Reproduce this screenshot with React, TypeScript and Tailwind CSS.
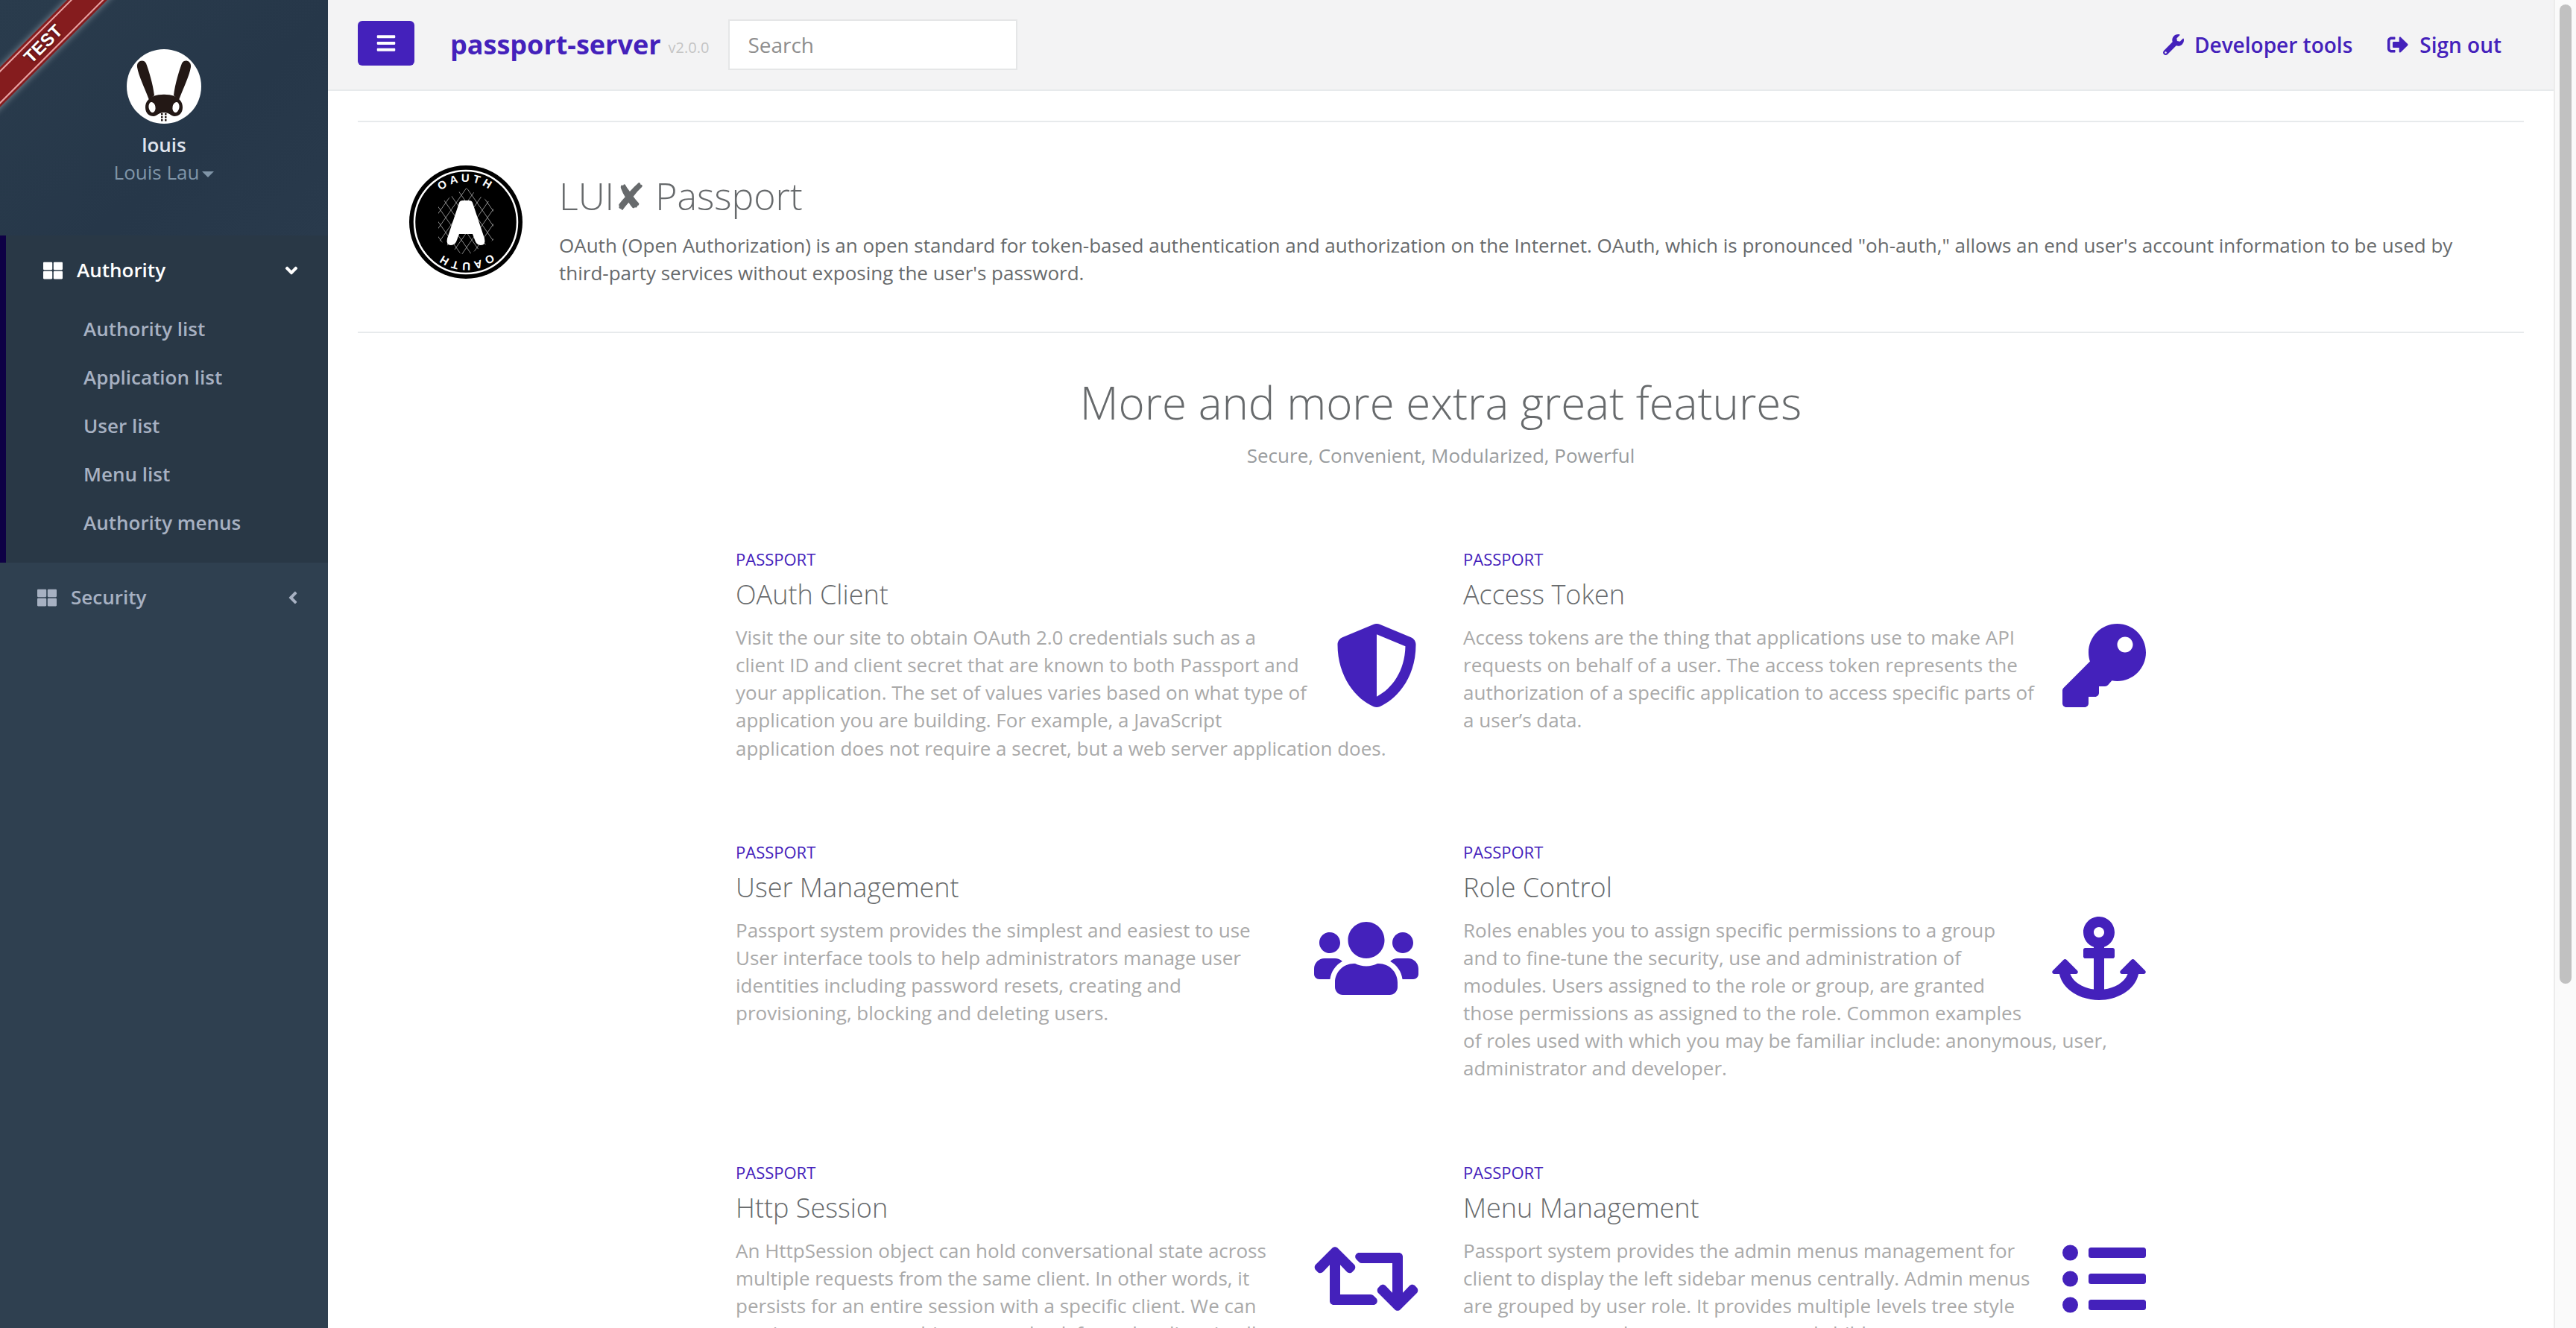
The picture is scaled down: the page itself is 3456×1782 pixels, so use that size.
import React from "react";
import { FaBars, FaWrench, FaSignOutAlt, FaThLarge, FaAngleDown, FaAngleLeft, FaShieldAlt, FaKey, FaUsers, FaAnchor, FaRetweet, FaListUl } from "react-icons/fa";

type FeatureData = { title: string; text: string; Icon: React.ComponentType<{ className?: string }>; iconClass: string };

const features: FeatureData[][] = [
  [
    { title: "OAuth Client", Icon: FaShieldAlt, iconClass: "w-[112px]", text: "Visit the our site to obtain OAuth 2.0 credentials such as a client ID and client secret that are known to both Passport and your application. The set of values varies based on what type of application you are building. For example, a JavaScript application does not require a secret, but a web server application does." },
    { title: "Access Token", Icon: FaKey, iconClass: "w-[112px]", text: "Access tokens are the thing that applications use to make API requests on behalf of a user. The access token represents the authorization of a specific application to access specific parts of a user’s data." },
  ],
  [
    { title: "User Management", Icon: FaUsers, iconClass: "w-[140px]", text: "Passport system provides the simplest and easiest to use User interface tools to help administrators manage user identities including password resets, creating and provisioning, blocking and deleting users." },
    { title: "Role Control", Icon: FaAnchor, iconClass: "w-[126px]", text: "Roles enables you to assign specific permissions to a group and to fine-tune the security, use and administration of modules. Users assigned to the role or group, are granted those permissions as assigned to the role. Common examples of roles used with which you may be familiar include: anonymous, user, administrator and developer." },
  ],
  [
    { title: "Http Session", Icon: FaRetweet, iconClass: "w-[140px]", text: "An HttpSession object can hold conversational state across multiple requests from the same client. In other words, it persists for an entire session with a specific client. We can use it to store everything we get back from the client in all requests." },
    { title: "Menu Management", Icon: FaListUl, iconClass: "w-[112px]", text: "Passport system provides the admin menus management for client to display the left sidebar menus centrally. Admin menus are grouped by user role. It provides multiple levels tree style management, and supports parent and child menus." },
  ],
];

function Bunny() {
  return (
    <svg viewBox="0 0 100 100" className="h-[100px] w-[100px]">
      <circle cx="50" cy="50" r="50" fill="#fff" />
      <g fill="#231815">
        <path d="M14 24C13 15 23 13 26 19C30 30 35 46 37 62L30 68C24 52 16 36 14 24Z" />
        <path d="M86 24C87 15 77 13 74 19C70 30 65 46 63 62L70 68C76 52 84 36 86 24Z" />
        <path d="M25 78C25 70 30 66 36 63C44 60 56 60 64 63C70 66 75 70 75 78C75 86 70 90 64 90C60 90 57 85 50 85C43 85 40 90 36 90C30 90 25 86 25 78Z" />
      </g>
      <ellipse cx="34" cy="78" rx="4.5" ry="7" fill="#fff" transform="rotate(-10 34 78)" />
      <ellipse cx="66" cy="78" rx="4.5" ry="7" fill="#fff" transform="rotate(10 66 78)" />
      <g fill="#231815">
        <rect x="46" y="86" width="2.5" height="2.5" />
        <rect x="51" y="86" width="2.5" height="2.5" />
        <rect x="46" y="90" width="2.5" height="2.5" />
        <rect x="51" y="90" width="2.5" height="2.5" />
        <rect x="46" y="94" width="2.5" height="2.5" />
        <rect x="51" y="94" width="2.5" height="2.5" />
      </g>
    </svg>
  );
}

function OAuthLogo() {
  return (
    <svg viewBox="0 0 152 152" className="h-[152px] w-[152px] shrink-0">
      <defs>
        <pattern id="mesh" width="14" height="20" patternUnits="userSpaceOnUse">
          <path d="M0 0L14 20M14 0L0 20" stroke="#9a9a9a" strokeWidth="0.9" fill="none" />
        </pattern>
        <path id="arcTop" d="M76 76m-54 0a54 54 0 0 1 108 0" fill="none" />
      </defs>
      <circle cx="76" cy="76" r="76" fill="#000" />
      <circle cx="76" cy="76" r="69" fill="none" stroke="#fff" strokeWidth="2.5" />
      <path d="M76 30L113 52V100L76 122L39 100V52Z" fill="url(#mesh)" />
      <path d="M67 50Q68 47 72 47L80 47Q84 47 85 50L101 98Q103 107 96 107Q90 107 88 100L85 92L67 92L64 100Q62 107 56 107Q49 107 51 98Z" fill="#fff" />
      <text fill="#fff" fontSize="15" fontWeight="700" textAnchor="middle" letterSpacing="4" fontFamily="'Liberation Sans', sans-serif">
        <textPath href="#arcTop" startOffset="50%">OAUTH</textPath>
      </text>
      <g transform="rotate(180 76 76)">
        <text fill="#fff" fontSize="15" fontWeight="700" textAnchor="middle" letterSpacing="4" fontFamily="'Liberation Sans', sans-serif">
          <textPath href="#arcTop" startOffset="50%">OAUTH</textPath>
        </text>
      </g>
    </svg>
  );
}

function Ribbon() {
  return (
    <div className="absolute left-[-92px] top-[40px] w-[300px] -rotate-45 bg-[#851c1e] py-[3px] shadow-[0_0_10px_rgba(255,255,255,0.45)]">
      <div className="flex h-[32px] items-center justify-center border-y-2 border-[#e9a3a3] text-[24px] font-bold text-white [font-family:'Liberation_Sans',sans-serif] [text-shadow:0_0_4px_rgba(0,0,0,0.6)]">
        TEST
      </div>
    </div>
  );
}

function Sidebar() {
  return (
    <aside className="relative w-[440px] shrink-0 overflow-hidden bg-[#2f4050]">
      <div className="relative h-[316px] overflow-hidden bg-[linear-gradient(135deg,#2a3c4d,#263749_60%,#293a4c)]">
        <Ribbon />
        <div className="flex flex-col items-center pt-[66px]">
          <Bunny />
          <div className="mt-[10px] text-[26px] font-semibold leading-[37px] text-[#dfe4ed]">louis</div>
          <div className="flex items-center text-[26px] leading-[37px] text-[#8095a8]">
            Louis Lau
            <span className="ml-[4px] mt-[4px] h-0 w-0 border-x-[8px] border-t-[8px] border-x-transparent border-t-[#8095a8]" />
          </div>
        </div>
      </div>
      <div className="border-l-[8px] border-[#0e0045] bg-[#293846] pb-[21px]">
        <div className="flex h-[93px] items-center pl-[50px] pr-[36px] text-[26px] font-semibold text-white">
          <FaThLarge className="mr-[19px] h-[26px] w-[26px]" />
          <span className="flex-1">Authority</span>
          <FaAngleDown className="h-[26px] w-[26px]" />
        </div>
        {["Authority list", "Application list", "User list", "Menu list", "Authority menus"].map((t) => (
          <div key={t} className="h-[65px] pl-[104px] text-[26px] font-semibold leading-[65px] text-[#a7b1c2]">
            {t}
          </div>
        ))}
      </div>
      <div className="flex h-[93px] items-center pl-[50px] pr-[34px] text-[26px] font-semibold text-[#a7b1c2]">
        <FaThLarge className="mr-[19px] h-[26px] w-[26px]" />
        <span className="flex-1">Security</span>
        <FaAngleLeft className="h-[26px] w-[26px]" />
      </div>
    </aside>
  );
}

function TopBar() {
  return (
    <header className="flex h-[122px] shrink-0 items-center border-b-2 border-[#e7eaec] bg-[#f3f3f4] pl-[40px] pr-[70px]">
      <button className="mb-[4px] flex h-[60px] w-[76px] items-center justify-center rounded-[6px] bg-[#4421bb] text-white">
        <FaBars className="h-[28px] w-[28px]" />
      </button>
      <span className="ml-[48px] text-[36px] font-bold leading-none text-[#4421bb]">passport-server</span>
      <span className="ml-[10px] mt-[8px] text-[20px] leading-none text-[#c4c4c4]">v2.0.0</span>
      <div className="ml-[26px] flex h-[68px] w-[388px] items-center border-2 border-[#e5e6e7] bg-white pl-[24px] text-[28px] text-[#8e8e8e]">
        Search
      </div>
      <div className="flex-1" />
      <FaWrench className="h-[28px] w-[28px] text-[#4421bb]" />
      <span className="ml-[14px] text-[28px] font-semibold text-[#4421bb]">Developer tools</span>
      <FaSignOutAlt className="ml-[47px] h-[28px] w-[28px] text-[#4421bb]" />
      <span className="ml-[15px] text-[28px] font-semibold text-[#4421bb]">Sign out</span>
    </header>
  );
}

function Hero() {
  return (
    <section className="flex h-[285px] items-start border-y-2 border-[#e7eaec] pl-[69px] pr-[90px] pt-[58px]">
      <OAuthLogo />
      <div className="ml-[49px] pt-[10px]">
        <h2 className="text-[50px] font-light leading-[62px] text-[#676a6c]">LUI✘ Passport</h2>
        <p className="mt-[17px] text-[26px] leading-[37.14px] text-[#676a6c]">
          OAuth (Open Authorization) is an open standard for token-based authentication and authorization on the Internet. OAuth, which is pronounced "oh-auth," allows an end user's account information to be used by third-party services without exposing the user's password.
        </p>
      </div>
    </section>
  );
}

function Feature({ title, text, Icon, iconClass }: FeatureData) {
  return (
    <div className="w-[916px]">
      <small className="block text-[22px] leading-[31px] text-[#4421bb]">PASSPORT</small>
      <h3 className="mt-[12px] text-[36px] font-light leading-[40px] text-[#676a6c]">{title}</h3>
      <div className="mt-[19px] text-[26px] leading-[37.14px] text-[#a9a9a9]">
        <Icon className={`float-right ml-[35px] h-[112px] text-[#4421bb] ${iconClass}`} />
        {text}
      </div>
    </div>
  );
}

export default function App() {
  return (
    <div className="flex h-screen overflow-hidden bg-white [font-family:'Open_Sans',sans-serif]">
      <Sidebar />
      <div className="flex min-w-0 flex-1 flex-col overflow-hidden">
        <TopBar />
        <main className="px-[40px] pt-[40px]">
          <Hero />
          <div className="pt-[57px] text-center">
            <h1 className="text-[60px] font-light leading-[72px] text-[#676a6c]">More and more extra great features</h1>
            <p className="mt-[17px] text-[26px] leading-[37px] text-[#999c9e]">Secure, Convenient, Modularized, Powerful</p>
          </div>
          <div className="ml-[507px] mt-[105px] flex flex-col gap-[105px]">
            {features.map((row) => (
              <div key={row[0].title} className="grid grid-cols-[976px_976px]">
                {row.map((f) => (
                  <Feature key={f.title} {...f} />
                ))}
              </div>
            ))}
          </div>
        </main>
      </div>
      <div className="w-[30px] shrink-0 border-l-2 border-[#ececec] bg-[#fafafa] pl-[6px] pt-[6px]">
        <div className="h-[1314px] w-[16px] rounded-full bg-[#c1c1c1]" />
      </div>
    </div>
  );
}
